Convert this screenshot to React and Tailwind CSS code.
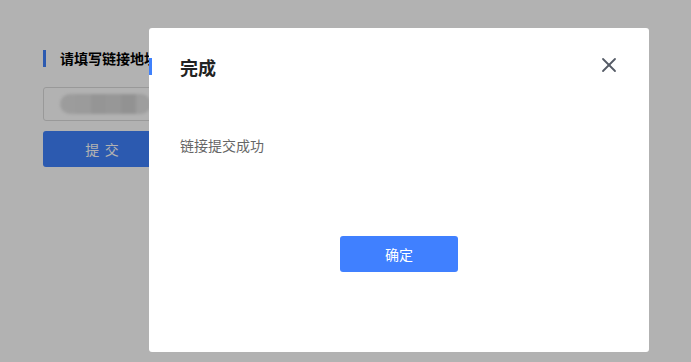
import { X } from "lucide-react";

const font = { fontFamily: '"Noto Sans CJK SC", "Microsoft YaHei", sans-serif' };

function LinkForm() {
  return (
    <div className="pt-[49px] pl-[43px]">
      <div className="flex items-center h-[18px]">
        <span className="w-[3px] h-[17px] bg-[#3f81fc]" />
        <span className="ml-[14px] text-[14px] font-bold text-black leading-[18px]">
          请填写链接地址
        </span>
      </div>

      <div className="mt-[20px] w-[400px] h-[34px] border border-[#dcdcdc] rounded-[3px] flex items-center pl-[16px]">
        <div className="flex blur-[1.5px]">
          <span className="w-[16px] h-[20px] bg-[#e0e0e0] rounded-l-full" />
          <span className="w-[15px] h-[20px] bg-[#dedede]" />
          <span className="w-[15px] h-[20px] bg-[#d6d6d6]" />
          <span className="w-[15px] h-[20px] bg-[#d9d9d9]" />
          <span className="w-[15px] h-[20px] bg-[#d2d2d2]" />
          <span className="w-[15px] h-[20px] bg-[#e2e2e2] rounded-r-full" />
        </div>
      </div>

      <button className="mt-[10px] w-[118px] h-[36px] bg-[#3f81fc] rounded-[3px] text-white text-[14px] tracking-[0.4em] pl-[0.4em]">
        提交
      </button>
    </div>
  );
}

function DoneDialog() {
  return (
    <div className="absolute left-[149px] top-[28px] w-[500px] h-[324px] bg-white rounded-[3px]">
      <span className="absolute left-0 top-[30px] w-[3px] h-[17px] bg-[#3f81fc]" />

      <button className="absolute right-[28px] top-[25px] text-[#555b66]">
        <X size={24} strokeWidth={1.8} />
      </button>

      <div className="pl-[31px] pt-[27px]">
        <h3 className="text-[18px] leading-[24px] font-bold text-[#222]">完成</h3>
        <p className="mt-[56px] text-[14px] leading-[20px] text-[#666]">链接提交成功</p>
      </div>

      <div className="flex justify-center mt-[81px]">
        <button className="w-[118px] h-[36px] bg-[#4080ff] rounded-[3px] text-white text-[14px]">
          确定
        </button>
      </div>
    </div>
  );
}

export default function App() {
  return (
    <div className="relative h-[362px] w-[691px] bg-white overflow-hidden" style={font}>
      <LinkForm />
      <div className="absolute inset-0 bg-black/30" />
      <DoneDialog />
    </div>
  );
}
